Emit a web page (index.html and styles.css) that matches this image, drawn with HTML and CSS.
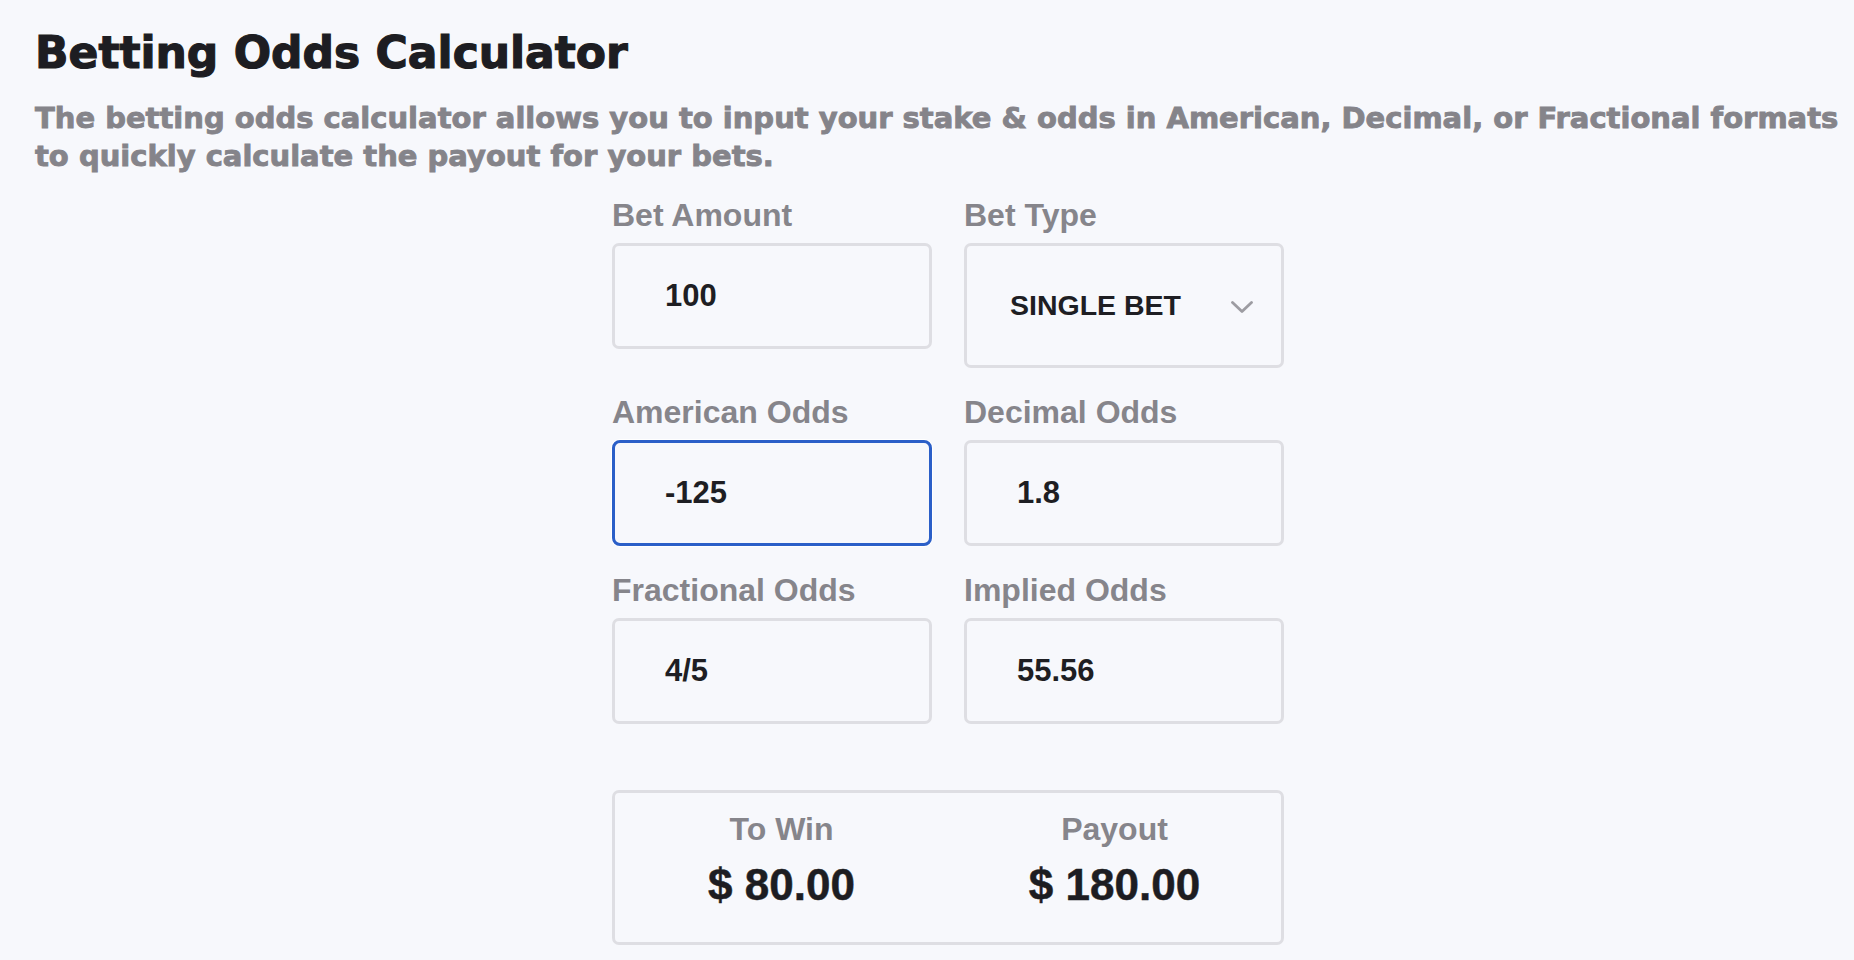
FILE: index.html
```html
<!DOCTYPE html>
<html lang="en">
<head>
<meta charset="utf-8">
<title>Betting Odds Calculator</title>
<link rel="stylesheet" href="styles.css">
</head>
<body>
<main class="page">
  <h1 class="title">Betting Odds Calculator</h1>
  <p class="intro">The betting odds calculator allows you to input your stake &amp; odds in American, Decimal, or Fractional formats<br>to quickly calculate the payout for your bets.</p>

  <form class="calc">
    <div class="grid">
      <label class="field">
        <span class="field-label">Bet Amount</span>
        <span class="box">100</span>
      </label>
      <label class="field">
        <span class="field-label">Bet Type</span>
        <span class="box box-select">
          <span>SINGLE BET</span>
          <svg class="chev" width="22" height="12" viewBox="0 0 22 12"><path d="M1.5 1.5 L11 10.5 L20.5 1.5" fill="none" stroke="#9d9ca2" stroke-width="2.8" stroke-linecap="round" stroke-linejoin="round"/></svg>
        </span>
      </label>
      <label class="field">
        <span class="field-label">American Odds</span>
        <span class="box box-focus">-125</span>
      </label>
      <label class="field">
        <span class="field-label">Decimal Odds</span>
        <span class="box">1.8</span>
      </label>
      <label class="field">
        <span class="field-label">Fractional Odds</span>
        <span class="box">4/5</span>
      </label>
      <label class="field">
        <span class="field-label">Implied Odds</span>
        <span class="box">55.56</span>
      </label>
    </div>

    <div class="result">
      <div class="result-col">
        <div class="result-label">To Win</div>
        <div class="result-value">$ 80.00</div>
      </div>
      <div class="result-col">
        <div class="result-label">Payout</div>
        <div class="result-value">$ 180.00</div>
      </div>
    </div>
  </form>
</main>
</body>
</html>
```

FILE: styles.css
```css
html, body {
  margin: 0;
  padding: 0;
  background: #f7f8fc;
}

.page {
  padding: 25px 0 0 35px;
}

.title {
  margin: 0;
  font-family: "DejaVu Sans", Inter, sans-serif;
  font-weight: 700;
  font-size: 44px;
  line-height: 56px;
  color: #1d1d22;
  -webkit-text-stroke: 1.2px #1d1d22;
}

.intro {
  margin: 18px 0 0 0;
  font-family: "DejaVu Sans", Inter, sans-serif;
  font-weight: 700;
  font-size: 29px;
  line-height: 38px;
  color: #85848a;
  -webkit-text-stroke: 0.9px #85848a;
  white-space: nowrap;
}

.calc {
  margin: 22px 0 0 577px;
  width: 672px;
  font-family: "Liberation Sans", Arial, sans-serif;
}

.grid {
  display: grid;
  grid-template-columns: 320px 320px;
  column-gap: 32px;
  row-gap: 26px;
  align-items: start;
}

.field {
  display: flex;
  flex-direction: column;
}

.field-label {
  font-size: 32px;
  line-height: 36px;
  font-weight: 700;
  color: #86858b;
  margin-bottom: 10px;
}

.box {
  box-sizing: border-box;
  height: 106px;
  display: flex;
  align-items: center;
  padding-left: 50px;
  border: 3px solid #dedee3;
  border-radius: 7px;
  font-size: 31px;
  font-weight: 700;
  color: #1e1e23;
}

.box-select {
  height: 125px;
  padding-left: 43px;
  padding-right: 28px;
  justify-content: space-between;
  font-size: 28.5px;
  padding-top: 0;
}

.chev {
  display: block;
  margin-top: 2px;
}

.box-focus {
  border-color: #2b5fc8;
  border-radius: 8px;
  box-shadow: 0 0 0 1px #ffffff;
}

.result {
  box-sizing: border-box;
  margin-top: 66px;
  height: 155px;
  border: 3px solid #dedee3;
  border-radius: 7px;
  display: grid;
  grid-template-columns: 1fr 1fr;
  padding-top: 18px;
}

.result-col {
  display: flex;
  flex-direction: column;
  align-items: center;
}

.result-label {
  font-size: 32px;
  line-height: 36px;
  font-weight: 700;
  color: #86858b;
}

.result-value {
  margin-top: 13px;
  font-size: 44px;
  line-height: 50px;
  font-weight: 700;
  color: #1d1d22;
  -webkit-text-stroke: 0.5px #1d1d22;
}
```
